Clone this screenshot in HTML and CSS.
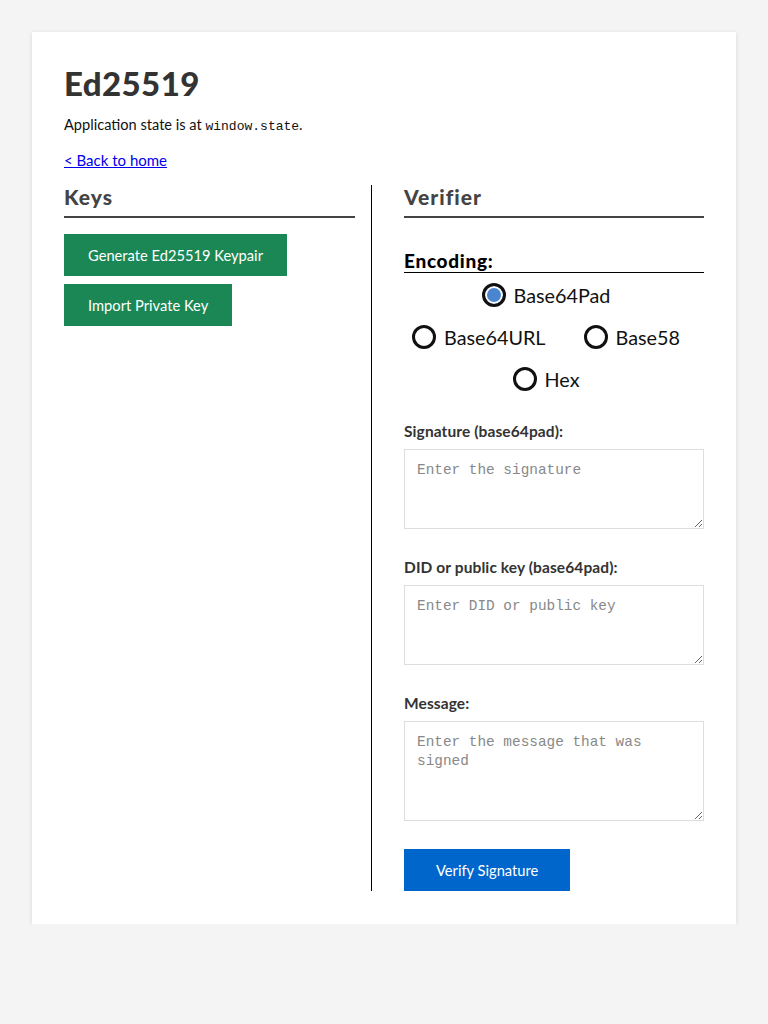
FILE: index.html
```html
<!DOCTYPE html>
<html lang="en">
<head>
<meta charset="utf-8">
<title>Ed25519</title>
<link rel="stylesheet" href="styles.css">
</head>
<body>
<main class="card">
  <h1 class="title">Ed25519</h1>
  <p class="intro">Application state is at <code class="code">window.state</code>.</p>
  <p class="back"><a href="#" class="back-link">&lt; Back to home</a></p>
  <div class="columns">
    <section class="col col-keys">
      <h2 class="section-title">Keys</h2>
      <div class="btn-stack">
        <button class="btn btn-green" type="button">Generate Ed25519 Keypair</button>
        <button class="btn btn-green" type="button">Import Private Key</button>
      </div>
    </section>
    <section class="col col-verifier">
      <h2 class="section-title">Verifier</h2>
      <h3 class="enc-title">Encoding:</h3>
      <div class="radios">
        <div class="radio-row">
          <label class="radio"><input type="radio" name="enc" checked><span>Base64Pad</span></label>
        </div>
        <div class="radio-row">
          <label class="radio"><input type="radio" name="enc"><span>Base64URL</span></label>
          <label class="radio"><input type="radio" name="enc"><span>Base58</span></label>
        </div>
        <div class="radio-row">
          <label class="radio"><input type="radio" name="enc"><span>Hex</span></label>
        </div>
      </div>
      <label class="field-label">Signature (base64pad):</label>
      <textarea class="field field-sm" placeholder="Enter the signature"></textarea>
      <label class="field-label field-label-next">DID or public key (base64pad):</label>
      <textarea class="field field-sm" placeholder="Enter DID or public key"></textarea>
      <label class="field-label field-label-next">Message:</label>
      <textarea class="field field-lg" placeholder="Enter the message that was signed"></textarea>
      <button class="btn btn-blue" type="button">Verify Signature</button>
    </section>
  </div>
</main>
</body>
</html>
```

FILE: styles.css
```css
* { box-sizing: border-box; }
html, body { margin: 0; padding: 0; }
body {
  background: #f4f4f4;
  font-family: Lato, "Open Sans", sans-serif;
  color: #222;
  padding: 32px 32px 0;
}
.card {
  width: 704px;
  background: #fff;
  padding: 32px 32px 33px;
  box-shadow: 0 1px 4px rgba(0,0,0,0.12);
}
.title {
  margin: 0;
  font-size: 33px;
  line-height: 38px;
  font-weight: 900;
  color: #333;
  letter-spacing: 0.4px;
}
.intro {
  margin: 13px 0 0;
  font-size: 14.6px;
  line-height: 20px;
  color: #111;
}
.code {
  font-family: "Liberation Mono", monospace;
  font-size: 13px;
}
.back {
  margin: 13px 0 0;
  font-size: 15px;
  line-height: 20px;
}
.back-link { color: #0000ee; }
.columns {
  margin-top: 15px;
  display: grid;
  grid-template-columns: 308px 1fr;
}
.col-keys {
  border-right: 1px solid #000;
  padding-right: 16px;
}
.col-verifier {
  padding-left: 32px;
  display: flex;
  flex-direction: column;
  align-items: flex-start;
}
.section-title {
  margin: 0;
  width: 100%;
  font-size: 21px;
  line-height: 24px;
  font-weight: 900;
  letter-spacing: 1px;
  color: #444;
  padding-bottom: 7px;
  border-bottom: 2px solid #444;
}
.btn-stack {
  margin-top: 16px;
  display: flex;
  flex-direction: column;
  align-items: flex-start;
  gap: 8px;
}
.btn {
  border: 0;
  height: 42px;
  padding: 0 24px;
  font-family: Lato, "Open Sans", sans-serif;
  font-size: 14.7px;
  color: #fff;
  cursor: pointer;
}
.btn-green { background: #1a8754; }
.btn-blue {
  background: #0066cc;
  margin-top: 28px;
  padding: 0 32px;
}
.enc-title {
  margin: 32px 0 0;
  width: 100%;
  font-size: 19px;
  line-height: 22px;
  font-weight: 900;
  letter-spacing: 0.7px;
  color: #000;
  border-bottom: 1px solid #000;
}
.radios {
  width: 100%;
  margin-top: 1px;
}
.radio-row {
  height: 42px;
  display: flex;
  justify-content: center;
  align-items: center;
  gap: 22px;
}
.radio {
  display: inline-flex;
  align-items: center;
  gap: 8px;
  margin-right: 16px;
  font-size: 19.8px;
  color: #111;
}
.radio input {
  appearance: none;
  -webkit-appearance: none;
  margin: 0;
  width: 24px;
  height: 24px;
  border: 3px solid #111;
  border-radius: 50%;
  background: #fff;
}
.radio input:checked {
  background: #4a86d0;
  box-shadow: inset 0 0 0 2px #fff;
}
.field-label {
  margin-top: 21px;
  font-size: 15.5px;
  line-height: 20px;
  font-weight: 700;
  letter-spacing: 0.1px;
  color: #333;
}
.field-label-next { margin-top: 28px; }
.field {
  margin-top: 8px;
  width: 100%;
  border: 1px solid #ddd;
  padding: 11px 12px;
  font-family: "Liberation Mono", monospace;
  font-size: 14.4px;
  line-height: 19px;
  color: #333;
  resize: vertical;
}
.field::placeholder { color: #888; }
.field-sm { height: 80px; }
.field-lg { height: 100px; }
```
